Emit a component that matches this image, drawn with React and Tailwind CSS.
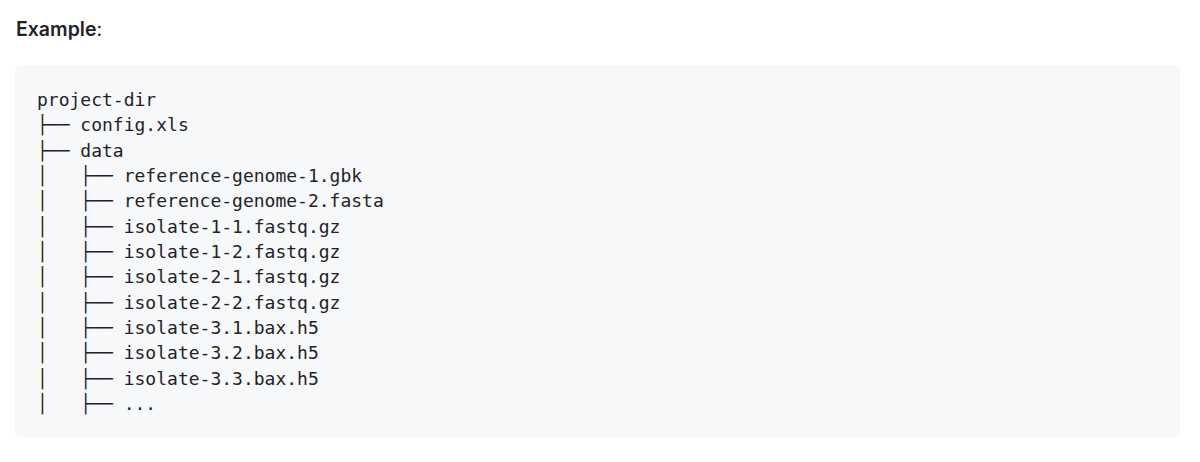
export default function App() {
  const lines = [
    "project-dir",
    "├── config.xls",
    "├── data",
    "│   ├── reference-genome-1.gbk",
    "│   ├── reference-genome-2.fasta",
    "│   ├── isolate-1-1.fastq.gz",
    "│   ├── isolate-1-2.fastq.gz",
    "│   ├── isolate-2-1.fastq.gz",
    "│   ├── isolate-2-2.fastq.gz",
    "│   ├── isolate-3.1.bax.h5",
    "│   ├── isolate-3.2.bax.h5",
    "│   ├── isolate-3.3.bax.h5",
    "│   ├── ...",
  ];
  return (
    <div className="w-[1200px] h-[462px] bg-white pl-[15px] pt-[16px]">
      <p
        className="text-[19.5px] leading-[26px] text-[#1f2328] pl-[1px]"
        style={{ fontFamily: "Inter, 'Liberation Sans', sans-serif" }}
      >
        <span className="font-semibold">Example</span>:
      </p>
      <pre
        className="mt-[23px] w-[1165px] h-[372px] rounded-[6px] bg-[#f6f8fa] pl-[22px] pt-[22px] text-[18px] leading-[25.33px] text-[#1f2328]"
        style={{ fontFamily: "'DejaVu Sans Mono', 'Liberation Mono', monospace" }}
      >
        {lines.join("\n")}
      </pre>
    </div>
  );
}
